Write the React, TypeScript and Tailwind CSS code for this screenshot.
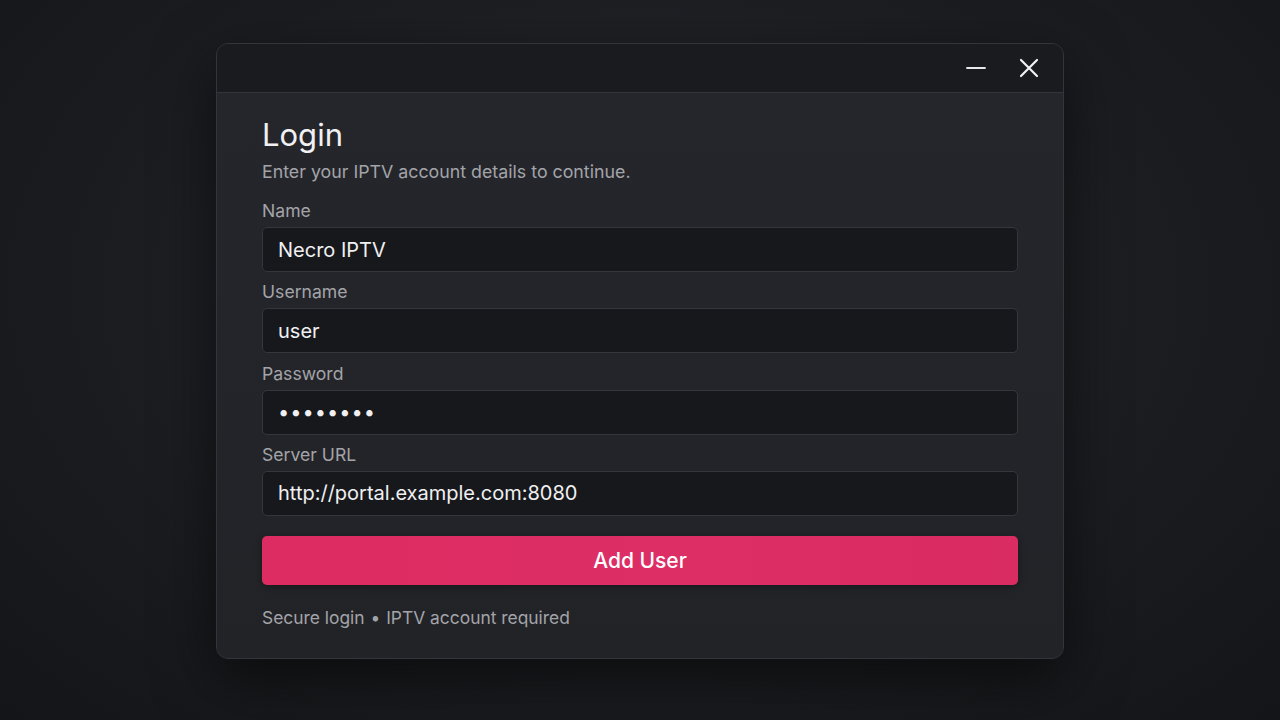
import React from 'react';

const fields = [
  { label: 'Name', value: 'Necro IPTV' },
  { label: 'Username', value: 'user' },
  { label: 'Password', value: '••••••••', secret: true },
  { label: 'Server URL', value: 'http://portal.example.com:8080' },
];

export default function App() {
  return (
    <div
      className="w-[1280px] h-[720px] flex items-start justify-center pt-[43px] bg-[radial-gradient(ellipse_at_50%_40%,#2a2b30_0%,#1d1e22_50%,#141518_100%)]"
      style={{ fontFamily: 'Inter, "Noto Sans", sans-serif' }}
    >
      <div className="w-[848px] h-[616px] rounded-[12px] border border-[#34353a] bg-[#232428] shadow-[0_20px_60px_rgba(0,0,0,0.55)] overflow-hidden flex flex-col">
        <div className="h-[49px] shrink-0 bg-[#1a1b1f] border-b border-[#34353a] flex items-center justify-end pr-[22px] gap-[31px]">
          <button className="w-[20px] h-[24px] flex items-center justify-center text-[#e8e8ea]" aria-label="Minimize">
            <svg width="20" height="20" viewBox="0 0 20 20" fill="none">
              <line x1="1" y1="10" x2="19" y2="10" stroke="currentColor" strokeWidth="1.8" strokeLinecap="round" />
            </svg>
          </button>
          <button className="w-[24px] h-[24px] flex items-center justify-center text-[#f2f2f4]" aria-label="Close">
            <svg width="20" height="20" viewBox="0 0 20 20" fill="none">
              <path d="M2 2 L18 18 M18 2 L2 18" stroke="currentColor" strokeWidth="2.2" strokeLinecap="round" />
            </svg>
          </button>
        </div>

        <div className="flex-1 px-[45px] pt-[23px] bg-[linear-gradient(180deg,#25262b_0%,#222327_100%)]">
          <h1 className="text-[31px] leading-[38px] font-normal text-[#f1f1f3]">Login</h1>
          <p className="mt-[6px] text-[17.8px] leading-[24px] text-[#a3a4a9]">Enter your IPTV account details to continue.</p>

          <div className="mt-[16px] flex flex-col gap-[9.3px]">
            {fields.map((f) => (
              <div key={f.label} className="flex flex-col">
                <label className="text-[17.6px] leading-[22px] text-[#a3a4a9] mb-[5px]">{f.label}</label>
                <div className="h-[45px] rounded-[5px] border border-[#35363b] bg-[#17181c] flex items-center px-[15px]">
                  {f.secret ? (
                    <span className="text-[20px] tracking-[1px] text-[#f0f0f2]">{f.value}</span>
                  ) : (
                    <span className="text-[20px] text-[#f0f0f2]">{f.value}</span>
                  )}
                </div>
              </div>
            ))}
          </div>

          <button className="mt-[20px] w-full h-[49px] rounded-[5px] bg-[linear-gradient(90deg,#dc2c61_0%,#dd2e66_60%,#d92c62_100%)] text-[21px] font-medium text-white shadow-[0_2px_6px_rgba(0,0,0,0.3)]">
            Add User
          </button>

          <p className="mt-[21px] text-[17.4px] leading-[24px] text-[#a3a4a9]">
            Secure login <span className="mx-[1px]">•</span> IPTV account required
          </p>
        </div>
      </div>
    </div>
  );
}
